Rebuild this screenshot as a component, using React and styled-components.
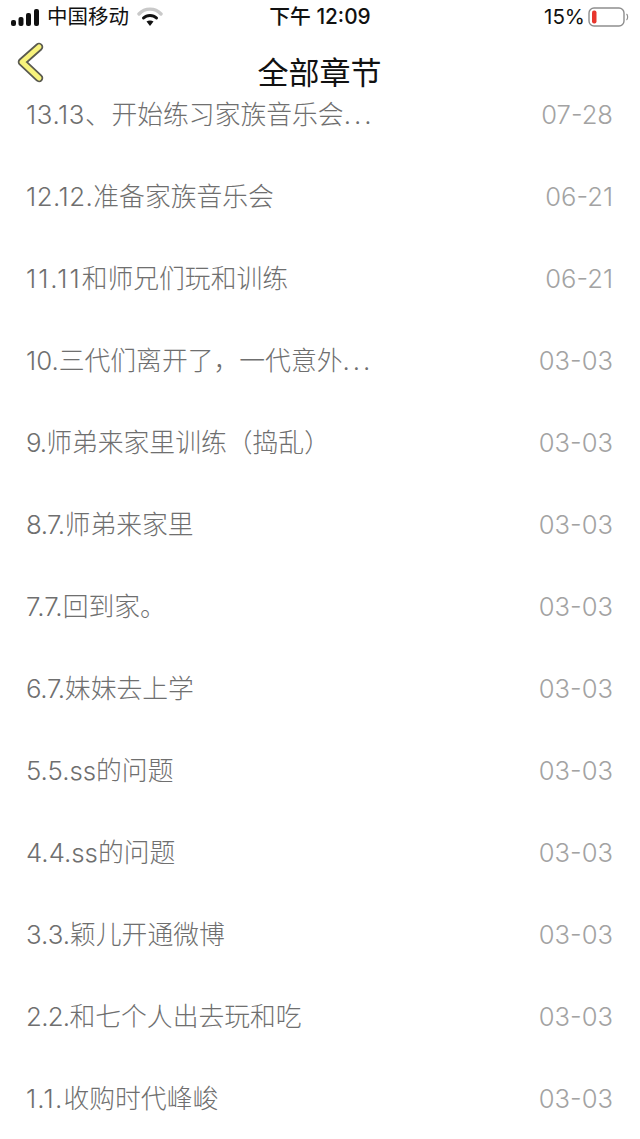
import styled, { createGlobalStyle } from "styled-components";

const chapters = [
  { prefix: "13.13、", spread: 0.6, title: "开始练习家族音乐会", date: "07-28", more: true },
  { prefix: "12.12.", spread: 0.5, title: "准备家族音乐会", date: "06-21" },
  { prefix: "11.11", spread: 2, title: "和师兄们玩和训练", date: "06-21" },
  { prefix: "10.", spread: 0, title: "三代们离开了，一代意外", date: "03-03", more: true },
  { prefix: "9.", spread: -1, title: "师弟来家里训练（捣乱）", date: "03-03" },
  { prefix: "8.7.", spread: -0.5, title: "师弟来家里", date: "03-03" },
  { prefix: "7.7.", spread: 0, title: "回到家。", date: "03-03" },
  { prefix: "6.7.", spread: -0.3, title: "妹妹去上学", date: "03-03" },
  { prefix: "5.5.ss", spread: 0, title: "的问题", date: "03-03" },
  { prefix: "4.4.ss", spread: 0, title: "的问题", date: "03-03" },
  { prefix: "3.3.", spread: 0, title: "颖儿开通微博", date: "03-03" },
  { prefix: "2.2.", spread: -0.7, title: "和七个人出去玩和吃", date: "03-03" },
  { prefix: "1.1.", spread: 1.2, title: "收购时代峰峻", date: "03-03" },
];

const GlobalStyle = createGlobalStyle`
  html, body {
    margin: 0;
    background: #fff;
  }
`;

const Page = styled.div`
  width: 640px;
  height: 1139px;
  overflow: hidden;
  background: #fff;
  font-family: "Inter", "Noto Sans CJK SC", sans-serif;
`;

const StatusBar = styled.div`
  display: grid;
  grid-template-columns: 1fr auto 1fr;
  align-items: center;
  height: 34px;
  padding: 0 11px;
  color: #111;
  font-size: 20.5px;
  line-height: 34px;
`;

const StatusLeft = styled.div`
  display: flex;
  align-items: center;
  gap: 8px;
`;

const Time = styled.div`
  font-weight: 500;
  font-size: 20.8px;
`;

const StatusRight = styled.div`
  display: flex;
  align-items: center;
  justify-content: flex-end;
  gap: 3px;
`;

const Header = styled.header`
  position: relative;
  display: flex;
  justify-content: center;
  height: 68px;
  padding-top: 20px;
  box-sizing: border-box;
`;

const BackIcon = styled.svg`
  position: absolute;
  left: 16px;
  top: 8px;
`;

const Title = styled.h1`
  margin: 0 0 0 -1px;
  font-size: 31px;
  line-height: 38px;
  font-weight: 400;
  color: #111;
`;

const List = styled.ul`
  display: flex;
  flex-direction: column;
  gap: 56px;
  margin: 0;
  padding: 0 27px 0 26px;
  list-style: none;
`;

const Row = styled.li`
  display: flex;
  justify-content: space-between;
  align-items: center;
  height: 26px;
`;

const ChapterName = styled.span`
  font-size: 25.8px;
  line-height: 26px;
  font-weight: 300;
  color: #6f6f6f;
  white-space: nowrap;
`;

const Prefix = styled.span`
  letter-spacing: ${({ $spread }) => $spread}px;
`;

const More = styled.span`
  letter-spacing: 3px;
`;

const ChapterDate = styled.span`
  font-size: 25.6px;
  line-height: 26px;
  font-weight: 300;
  color: #a3a3a3;
`;

const SignalIcon = () => (
  <svg width="28" height="17" viewBox="0 0 28 17">
    <rect x="0" y="11" width="5" height="6" rx="2" fill="#111" />
    <rect x="7.5" y="8" width="5" height="9" rx="2" fill="#111" />
    <rect x="15" y="4" width="5" height="13" rx="2" fill="#111" />
    <rect x="23" y="0" width="5" height="17" rx="2" fill="#111" />
  </svg>
);

const WifiIcon = () => (
  <svg width="26" height="20" viewBox="0 0 26 20" fill="none" strokeLinecap="round">
    <path d="M2 7 C8 0.5 18 0.5 24 7" stroke="#c9c9c9" strokeWidth="3.4" />
    <path d="M6.5 11 C10 7.5 16 7.5 19.5 11" stroke="#111" strokeWidth="3" />
    <path d="M9.5 14.5 L13 19 L16.5 14.5 C14.5 13 11.5 13 9.5 14.5 Z" fill="#111" />
  </svg>
);

const BatteryIcon = () => (
  <svg width="41" height="20" viewBox="0 0 41 20" fill="none">
    <rect x="1" y="1" width="35" height="18" rx="5" stroke="#8e8e8e" strokeWidth="1.4" />
    <rect x="4" y="3.5" width="4.5" height="13" rx="2" fill="#e8362d" />
    <path d="M38.5 7 C40 8 40 12 38.5 13" stroke="#8e8e8e" strokeWidth="1.2" />
  </svg>
);

const BackChevron = () => (
  <BackIcon width="30" height="42" viewBox="0 0 30 42" fill="none" strokeLinecap="round" strokeLinejoin="round">
    <path d="M23 5 L6 20 L23 36" stroke="#5a5a50" strokeWidth="8.5" />
    <path d="M23 5 L6 20 L23 36" stroke="#f8f37c" strokeWidth="5" />
  </BackIcon>
);

export default function App() {
  return (
    <Page>
      <GlobalStyle />
      <StatusBar>
        <StatusLeft>
          <SignalIcon />
          <span>中国移动</span>
          <WifiIcon />
        </StatusLeft>
        <Time>下午 12:09</Time>
        <StatusRight>
          <span>15%</span>
          <BatteryIcon />
        </StatusRight>
      </StatusBar>
      <Header>
        <BackChevron />
        <Title>全部章节</Title>
      </Header>
      <List>
        {chapters.map(({ prefix, spread, title, date, more }) => (
          <Row key={prefix}>
            <ChapterName>
              <Prefix $spread={spread}>{prefix}</Prefix>
              {title}
              {more && <More>...</More>}
            </ChapterName>
            <ChapterDate>{date}</ChapterDate>
          </Row>
        ))}
      </List>
    </Page>
  );
}
